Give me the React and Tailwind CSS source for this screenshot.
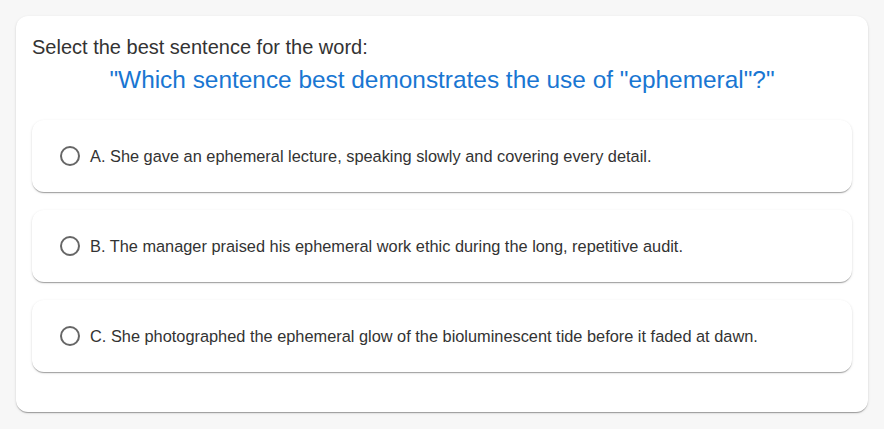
const options = [
  "A. She gave an ephemeral lecture, speaking slowly and covering every detail.",
  "B. The manager praised his ephemeral work ethic during the long, repetitive audit.",
  "C. She photographed the ephemeral glow of the bioluminescent tide before it faded at dawn.",
];

const App = () => {
  return (
    <div className="min-h-screen bg-[#f7f7f7] p-4 font-['Liberation_Sans',Arial,sans-serif]">
      <div className="bg-white rounded-xl shadow-[0_2px_1px_-1px_rgba(0,0,0,0.2),0_1px_1px_0_rgba(0,0,0,0.14),0_1px_3px_0_rgba(0,0,0,0.12)] px-4 pt-4 pb-10">
        <p className="text-[20px] leading-[30px] text-[#333]">
          Select the best sentence for the word:
        </p>
        <h2 className="text-center text-[24.4px] leading-[36px] text-[#1976d2] mb-[22px]">
          "Which sentence best demonstrates the use of "ephemeral"?"
        </h2>

        <div className="flex flex-col gap-[18px]">
          {options.map((opt) => (
            <label
              key={opt}
              className="flex items-center h-[72px] px-7 rounded-xl bg-white cursor-pointer shadow-[0_2px_1px_-1px_rgba(0,0,0,0.2),0_1px_1px_0_rgba(0,0,0,0.14),0_1px_3px_0_rgba(0,0,0,0.12)]"
            >
              {/* radio */}
              <span className="w-5 h-5 rounded-full border-2 border-[#666] shrink-0 mr-2.5" />
              <span className="text-[16.35px] text-[#333]">{opt}</span>
            </label>
          ))}
        </div>
      </div>
    </div>
  );
};

export default App;
